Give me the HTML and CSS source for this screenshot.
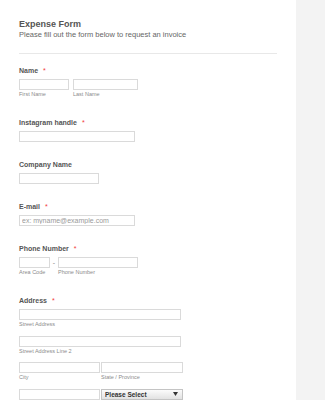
FILE: index.html
```html
<!DOCTYPE html>
<html lang="en">
<head>
    <meta charset="UTF-8">
    <meta name="viewport" content="width=device-width, initial-scale=1.0">
    <title>Expense Form</title>
    <link rel="stylesheet" href="styles.css">
</head>
<body>

    <!-- form area -->
    <div class="form">
        <div class="form-header">
            <h1>Expense Form</h1>
            <p>Please fill out the form below to request an invoice</p>
        </div>

        <div class="field">
            <label>Name <span class="req">*</span></label>
            <div class="row">
                <div class="sub">
                    <input type="text" class="w-first">
                    <span class="sub-label">First Name</span>
                </div>
                <div class="sub">
                    <input type="text" class="w-last">
                    <span class="sub-label">Last Name</span>
                </div>
            </div>
        </div>

        <div class="field">
            <label>Instagram handle <span class="req">*</span></label>
            <input type="text" class="w-mid">
        </div>

        <div class="field">
            <label>Company Name</label>
            <input type="text" class="w-short">
        </div>

        <div class="field">
            <label>E-mail <span class="req">*</span></label>
            <input type="text" class="w-mid" placeholder="ex: myname@example.com">
        </div>

        <div class="field">
            <label>Phone Number <span class="req">*</span></label>
            <div class="row phone">
                <div class="sub">
                    <input type="text" class="w-area">
                    <span class="sub-label">Area Code</span>
                </div>
                <span class="dash">-</span>
                <div class="sub">
                    <input type="text" class="w-phone">
                    <span class="sub-label">Phone Number</span>
                </div>
            </div>
        </div>

        <div class="field">
            <label>Address <span class="req">*</span></label>
            <div class="sub addr">
                <input type="text" class="w-full">
                <span class="sub-label">Street Address</span>
            </div>
            <div class="sub addr">
                <input type="text" class="w-full">
                <span class="sub-label">Street Address Line 2</span>
            </div>
            <div class="row tight">
                <div class="sub addr">
                    <input type="text" class="w-city">
                    <span class="sub-label">City</span>
                </div>
                <div class="sub addr">
                    <input type="text" class="w-state">
                    <span class="sub-label">State / Province</span>
                </div>
            </div>
            <div class="row tight">
                <div class="sub addr">
                    <input type="text" class="w-city">
                    <span class="sub-label">Postal / Zip Code</span>
                </div>
                <div class="sub addr">
                    <select class="w-state">
                        <option>Please Select</option>
                    </select>
                    <span class="sub-label">Country</span>
                </div>
            </div>
        </div>
    </div>

</body>
</html>
```

FILE: styles.css
```css
body, html {
    margin: 0;
    padding: 0;
    font-family: "Liberation Sans", Arial, sans-serif;
    background-color: #f3f3f3; /* grey page behind the form */
    color: #555;
}

.form {
    width: 296px;
    min-height: 100vh;
    box-sizing: border-box;
    background-color: #fff;
    padding: 19px 19px 0;
}

/* header */
.form-header {
    padding-bottom: 13px;
    border-bottom: 1px solid #e8e8e8;
    margin-bottom: 12px;
}

.form-header h1 {
    margin: 0;
    font-size: 9px;
    line-height: 11px;
    font-weight: bold;
    color: #555;
}

.form-header p {
    margin: 0;
    font-size: 7.5px;
    line-height: 10px;
    color: #666;
}

/* fields */
.field {
    padding-bottom: 18px;
}

.field label {
    display: block;
    font-size: 7px;
    line-height: 9px;
    font-weight: bold;
    color: #555;
    margin-bottom: 4px;
}

.req {
    color: #f23a3a;
    margin-left: 3px;
    font-weight: normal;
}

.row {
    display: flex;
    gap: 4px;
}

.row.phone {
    gap: 2px;
}

.row.tight {
    gap: 1px;
}

.sub {
    display: flex;
    flex-direction: column;
    margin-bottom: 2px;
}

.sub.addr {
    margin-bottom: 7.5px;
}

.sub-label {
    margin-top: 1px;
    font-size: 5.5px;
    line-height: 7px;
    color: #8c8c8c;
}

.dash {
    font-size: 7px;
    line-height: 11px;
    color: #888;
    width: 4px;
    text-align: center;
}

input[type="text"], select {
    display: block;
    height: 11px;
    box-sizing: border-box;
    border: 1px solid #dadada;
    border-radius: 0;
    background-color: #fff;
    margin: 0;
    padding: 0 2px;
    font-family: "Liberation Sans", Arial, sans-serif;
    font-size: 7px;
    color: #555;
    outline: none;
}

input::placeholder {
    color: #9a9a9a;
}

select {
    appearance: none;
    -webkit-appearance: none;
    padding: 0 3px;
    font-weight: bold;
    font-size: 6.5px;
    color: #333;
    border-color: #c4c4c4;
    background-image: url("data:image/svg+xml,%3Csvg xmlns='http://www.w3.org/2000/svg' width='5' height='4'%3E%3Cpath d='M0 0h5L2.5 4z' fill='%23333'/%3E%3C/svg%3E"), linear-gradient(#fbfbfb, #e2e2e2);
    background-repeat: no-repeat;
    background-position: right 4px center, 0 0;
}

/* widths */
.w-first { width: 50px; }
.w-last { width: 65px; }
.w-mid { width: 116px; }
.w-short { width: 80px; }
.w-area { width: 31px; }
.w-phone { width: 80px; }
.w-full { width: 162px; }
.w-city { width: 81px; }
.w-state { width: 82px; }
```
